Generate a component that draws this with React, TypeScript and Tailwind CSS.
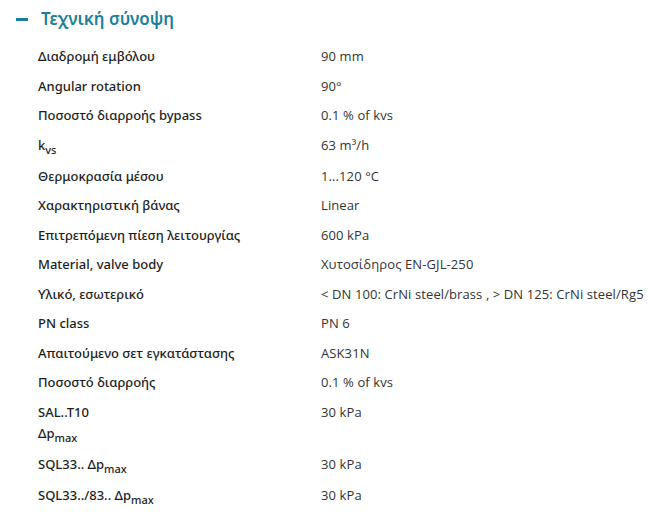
import React from "react";

type Row = { label: React.ReactNode; value: React.ReactNode; tall?: boolean };

const Sub = ({ children }: { children: React.ReactNode }) => (
  <span className="relative top-[4px] text-[11px] leading-none">{children}</span>
);

const rows: Row[] = [
  { label: "Διαδρομή εμβόλου", value: "90 mm" },
  { label: "Angular rotation", value: "90°" },
  { label: "Ποσοστό διαρροής bypass", value: "0.1 % of kvs" },
  { label: <>k<Sub>vs</Sub></>, value: <>63 m³/h</>, tall: true },
  { label: "Θερμοκρασία μέσου", value: "1...120 °C" },
  { label: "Χαρακτηριστική βάνας", value: "Linear" },
  { label: "Επιτρεπόμενη πίεση λειτουργίας", value: "600 kPa" },
  { label: "Material, valve body", value: "Χυτοσίδηρος EN-GJL-250" },
  { label: "Υλικό, εσωτερικό", value: "< DN 100: CrNi steel/brass , > DN 125: CrNi steel/Rg5" },
  { label: "PN class", value: "PN 6" },
  { label: "Απαιτούμενο σετ εγκατάστασης", value: "ASK31N" },
  { label: "Ποσοστό διαρροής", value: "0.1 % of kvs" },
  { label: <>SAL..T10<br />Δp<Sub>max</Sub></>, value: "30 kPa", tall: true },
  { label: <>SQL33.. Δp<Sub>max</Sub></>, value: "30 kPa", tall: true },
  { label: <>SQL33../83.. Δp<Sub>max</Sub></>, value: "30 kPa", tall: true },
];

export default function App() {
  return (
    <div className="w-[657px] h-[532px] bg-white overflow-hidden">
      <div className="flex items-center pl-[16px] pt-[6px] h-[26px] box-content">
        <span className="block w-[12px] h-[3px] bg-[#1c7f9a]" />
        <span
          className="ml-[13px] text-[17px] font-semibold leading-[26px] text-[#1c7f9a]"
          style={{ fontFamily: '"Noto Sans", sans-serif' }}
        >
          Τεχνική σύνοψη
        </span>
      </div>
      <div className="mt-[10px] pl-[38px]">
        {rows.map((r, i) => (
          <div
            key={i}
            className={
              r.tall
                ? "flex pt-[4px] pb-[5.5px] leading-[21.5px]"
                : "flex py-[4px] leading-[21.5px]"
            }
          >
            <div
              className="w-[283px] shrink-0 text-[13px] font-medium text-[#1e1e1e]"
              style={{ fontFamily: '"Noto Sans", sans-serif' }}
            >
              {r.label}
            </div>
            <div
              className="text-[13px] tracking-[0.1px] text-[#333333] whitespace-nowrap"
              style={{ fontFamily: '"Open Sans", sans-serif' }}
            >
              {r.value}
            </div>
          </div>
        ))}
      </div>
    </div>
  );
}
